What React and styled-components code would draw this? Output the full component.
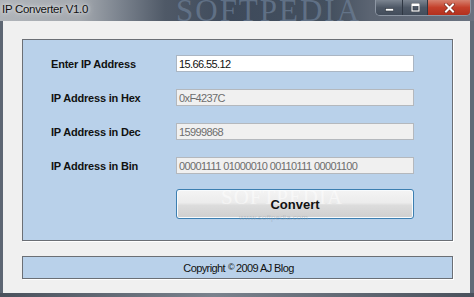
import React from "react";
import styled, { createGlobalStyle } from "styled-components";

const Global = createGlobalStyle`
  html, body { margin: 0; padding: 0; background: #3e4652; }
  body { width: 474px; height: 297px; overflow: hidden; font-family: "Liberation Sans", Arial, sans-serif; }
`;

const Window = styled.div`
  width: 474px;
  height: 297px;
  display: flex;
  flex-direction: column;
  background: #5a6270;
  position: relative;
  overflow: hidden;
`;

const TitleBar = styled.div`
  height: 21px;
  flex: none;
  display: flex;
  align-items: flex-start;
  justify-content: space-between;
  position: relative;
  overflow: hidden;
  background: linear-gradient(90deg, #b0b4b9 0px, #a4a9af 80px, #7b838e 120px, #4f5967 165px, #3e4a5b 230px, #44505f 330px, #5b6472 370px, #6a7280 474px);
`;

const Title = styled.span`
  position: relative;
  z-index: 1;
  margin: 3px 0 0 2px;
  font-size: 11.5px;
  color: #111;
  letter-spacing: -0.3px;
  text-shadow: 0 0 6px #e4e6e8, 0 0 3px #e4e6e8;
`;

const TitleMark = styled.span`
  position: absolute;
  left: 176px;
  top: -1px;
  font-family: "Liberation Serif", serif;
  font-size: 31px;
  line-height: 24px;
  letter-spacing: 2px;
  color: #6d7f96;
  opacity: 0.7;
  pointer-events: none;
`;

const Controls = styled.div`
  display: flex;
  margin-right: 3px;
  height: 15px;
  border: 1px solid #8d96a3;
  border-top: none;
  border-radius: 0 0 5px 5px;
  overflow: hidden;
  position: relative;
  z-index: 1;
`;

const CtrlButton = styled.div`
  width: ${(p) => p.$w}px;
  display: flex;
  align-items: center;
  justify-content: center;
  background: ${(p) =>
    p.$close
      ? "linear-gradient(180deg, #d6816f 0%, #c4402b 50%, #b2301e 100%)"
      : "linear-gradient(180deg, #7c8591 0%, #4e5866 50%, #434d5b 100%)"};
  border-left: ${(p) => (p.$first ? "none" : "1px solid #2f3743")};
  box-sizing: border-box;
`;

const Body = styled.div`
  flex: 1;
  display: flex;
  min-height: 0;
`;

const SideFrame = styled.div`
  width: ${(p) => p.$w}px;
  flex: none;
  background: ${(p) => p.$bg};
`;

const BottomFrame = styled.div`
  height: 4px;
  flex: none;
  background: linear-gradient(90deg, #4a515c, #7a828d 45%, #4a515c);
`;

const Client = styled.div`
  flex: 1;
  background: #f0f0f0;
  display: flex;
  flex-direction: column;
  padding: 18px 17px 14px 19px;
  gap: 15px;
  position: relative;
`;

const Panel = styled.div`
  background: #b9d1ea;
  border: 1px solid #6b6f75;
  box-shadow: 1px 1px 0 #ffffff;
  box-sizing: border-box;
`;

const MainPanel = styled(Panel)`
  height: 202px;
  display: grid;
  grid-template-columns: 125px 238px;
  grid-auto-rows: 17px;
  row-gap: 17px;
  padding: 15px 0 0 28px;
`;

const Label = styled.div`
  display: flex;
  align-items: center;
  font-weight: bold;
  font-size: 11px;
  color: #111;
  letter-spacing: -0.2px;
`;

const Field = styled.div`
  box-sizing: border-box;
  height: 17px;
  border: 1px solid ${(p) => (p.$ro ? "#b4b8bd" : "#abb6c3")};
  background: ${(p) => (p.$ro ? "#f0f0f0" : "#ffffff")};
  color: ${(p) => (p.$ro ? "#6d6d6d" : "#111")};
  font-size: 11px;
  letter-spacing: -0.6px;
  padding: 0 0 0 2px;
  display: flex;
  align-items: center;
  white-space: nowrap;
`;

const ConvertButton = styled.div`
  grid-column: 2;
  height: 30px;
  margin-top: -2px;
  box-sizing: border-box;
  border: 1px solid #3c7fb1;
  border-radius: 3px;
  background: linear-gradient(180deg, #f4f4f4 0%, #ececec 45%, #dcdcdc 55%, #cfcfcf 100%);
  box-shadow: inset 0 0 0 1px #f8fbfd;
  display: flex;
  align-items: center;
  justify-content: center;
  font-weight: bold;
  font-size: 13px;
  color: #111;
  position: relative;
`;

const ButtonText = styled.span`
  position: relative;
`;

const Footer = styled(Panel)`
  height: 23px;
  display: flex;
  align-items: center;
  justify-content: center;
  font-size: 11px;
  letter-spacing: -0.6px;
  color: #111;
  padding-left: 2px;
`;

const Copy = styled.span`
  font-size: 9px;
  position: relative;
  top: -1px;
  margin: 0 2px 0 3px;
`;

const ButtonMark = styled.div`
  position: absolute;
  left: 44px;
  top: -3px;
  font-family: "Liberation Serif", serif;
  font-size: 21px;
  line-height: 20px;
  letter-spacing: 1px;
  color: rgba(255, 255, 255, 0.5);
  pointer-events: none;
  font-weight: normal;
`;

const ButtonMarkUrl = styled.div`
  position: absolute;
  left: 62px;
  bottom: -4px;
  font-size: 8px;
  letter-spacing: 0;
  color: rgba(150, 160, 172, 0.45);
  font-weight: normal;
  pointer-events: none;
`;

const rows = [
  { label: "Enter IP Address", value: "15.66.55.12", ro: false },
  { label: "IP Address in Hex", value: "0xF4237C", ro: true },
  { label: "IP Address in Dec", value: "15999868", ro: true },
  { label: "IP Address in Bin", value: "00001111 01000010 00110111 00001100", ro: true },
];

export default function App() {
  return (
    <>
      <Global />
      <Window>
        <TitleBar>
          <Title>IP Converter V1.0</Title>
          <TitleMark>SOFTPEDIA</TitleMark>
          <Controls>
            <CtrlButton $w={26} $first>
              <svg width="9" height="8" viewBox="0 0 9 8">
                <rect x="0.5" y="4.5" width="8" height="2.5" fill="#fff" stroke="#30363f" strokeWidth="0.6" />
              </svg>
            </CtrlButton>
            <CtrlButton $w={25}>
              <svg width="9" height="9" viewBox="0 0 9 9">
                <rect x="1" y="1" width="7" height="7" fill="none" stroke="#30363f" strokeWidth="2.4" />
                <rect x="1" y="1" width="7" height="7" fill="none" stroke="#fff" strokeWidth="1.2" />
                <rect x="1" y="1" width="7" height="2" fill="#fff" />
              </svg>
            </CtrlButton>
            <CtrlButton $w={43} $close>
              <svg width="11" height="10" viewBox="0 0 11 10">
                <path d="M2 1.5 L9 8.5 M9 1.5 L2 8.5" stroke="#7a2a1f" strokeWidth="3.4" strokeLinecap="square" />
                <path d="M2 1.5 L9 8.5 M9 1.5 L2 8.5" stroke="#fff" strokeWidth="2" strokeLinecap="square" />
              </svg>
            </CtrlButton>
          </Controls>
        </TitleBar>
        <Body>
          <SideFrame $w={3} $bg="#5d6673" />
          <Client>
            <MainPanel>
              {rows.map((r) => (
                <React.Fragment key={r.label}>
                  <Label>{r.label}</Label>
                  <Field $ro={r.ro}>{r.value}</Field>
                </React.Fragment>
              ))}
              <ConvertButton>
                <ButtonMark>SOFTPEDIA</ButtonMark>
                <ButtonText>Convert</ButtonText>
                <ButtonMarkUrl>www.softpedia.com</ButtonMarkUrl>
              </ConvertButton>
            </MainPanel>
            <Footer>
              Copyright<Copy>©</Copy>2009 AJ Blog
            </Footer>
          </Client>
          <SideFrame $w={4} $bg="#626b78" />
        </Body>
        <BottomFrame />
      </Window>
    </>
  );
}
